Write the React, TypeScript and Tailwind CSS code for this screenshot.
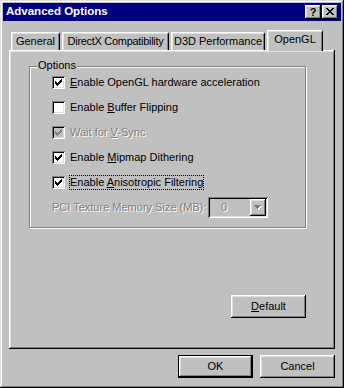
import React from "react";

const raised =
  "shadow-[inset_-1px_-1px_0_#000,inset_1px_1px_0_#fff,inset_-2px_-2px_0_#808080,inset_2px_2px_0_#dfdfdf]";
const sunken =
  "shadow-[inset_1px_1px_0_#808080,inset_-1px_-1px_0_#fff,inset_2px_2px_0_#000,inset_-2px_-2px_0_#dfdfdf]";
const disabledText = "text-[#808080] [text-shadow:1px_1px_0_#fff]";

function Check({ color = "#000" }: { color?: string }) {
  return (
    <svg width="7" height="7" viewBox="0 0 7 7" shapeRendering="crispEdges" className="block">
      <path
        fill={color}
        d="M6 0h1v1h-1zM5 1h2v1h-2zM0 2h1v1h-1zM4 2h3v1h-3zM0 3h2v1h-2zM3 3h3v1h-3zM0 4h5v1h-5zM1 5h3v1h-3zM2 6h1v1h-1z"
      />
    </svg>
  );
}

function CheckBox({ checked, disabled }: { checked?: boolean; disabled?: boolean }) {
  return (
    <div
      className={`w-[13px] h-[13px] shrink-0 flex items-center justify-center ${sunken} ${
        disabled ? "bg-[#c0c0c0]" : "bg-white"
      }`}
    >
      {checked && <Check color={disabled ? "#808080" : "#000"} />}
    </div>
  );
}

function Row({
  checked,
  disabled,
  focused,
  children,
}: {
  checked?: boolean;
  disabled?: boolean;
  focused?: boolean;
  children: React.ReactNode;
}) {
  return (
    <div className="flex items-center h-[13px]">
      <CheckBox checked={checked} disabled={disabled} />
      <span
        className={`ml-[4px] border leading-[13px] whitespace-nowrap ${
          focused ? "border-dotted border-black" : "border-transparent"
        } ${disabled ? disabledText : ""}`}
      >
        {children}
      </span>
    </div>
  );
}

function Tab({ label, w, active }: { label: string; w: string; active?: boolean }) {
  if (active) {
    return (
      <div
        className={`${w} relative z-10 -mb-px h-[21px] bg-[#c0c0c0] flex items-center justify-center pb-[2px] rounded-tr-[2px] shadow-[inset_1px_1px_0_#fff,inset_-1px_0_0_#000,inset_2px_2px_0_#dfdfdf,inset_-2px_0_0_#808080]`}
      >
        {label}
      </div>
    );
  }
  return (
    <div
      className={`${w} h-[18px] bg-[#c0c0c0] flex items-center justify-center whitespace-nowrap rounded-tr-[2px] shadow-[inset_1px_1px_0_#fff,inset_-1px_0_0_#000,inset_2px_2px_0_#dfdfdf,inset_-2px_0_0_#808080]`}
    >
      {label}
    </div>
  );
}

function Button({ children, isDefault }: { children: React.ReactNode; isDefault?: boolean }) {
  return (
    <div
      className={`w-[75px] h-[23px] flex items-center justify-center bg-[#c0c0c0] ${
        isDefault ? "border border-black" : ""
      } ${raised}`}
    >
      {children}
    </div>
  );
}

export default function App() {
  return (
    <div className="w-[344px] h-[388px] bg-[#c0c0c0] p-[3px] flex flex-col text-[11px] text-black font-['Liberation_Sans',Arial,sans-serif] select-none shadow-[inset_-1px_-1px_0_#000,inset_1px_1px_0_#dfdfdf,inset_-2px_-2px_0_#808080,inset_2px_2px_0_#fff]">
      {/* Title bar */}
      <div className="h-[18px] bg-[#000080] flex items-center pl-[3px] pr-[3px]">
        <span className="flex-1 text-white font-bold text-[11.5px] leading-none">Advanced Options</span>
        <div
          className={`w-[16px] h-[14px] bg-[#c0c0c0] flex items-center justify-center font-bold text-[11px] leading-none ${raised}`}
        >
          ?
        </div>
        <div className={`ml-[1px] w-[16px] h-[14px] bg-[#c0c0c0] flex items-center justify-center ${raised}`}>
          <svg width="8" height="7" viewBox="0 0 8 7" shapeRendering="crispEdges" className="block -mt-px">
            <path
              fill="#000"
              d="M0 0h2v1h-2zM6 0h2v1h-2zM1 1h2v1h-2zM5 1h2v1h-2zM2 2h4v1h-4zM3 3h2v1h-2zM2 4h4v1h-4zM1 5h2v1h-2zM5 5h2v1h-2zM0 6h2v1h-2zM6 6h2v1h-2z"
            />
          </svg>
        </div>
      </div>

      {/* Tabs + panel */}
      <div className="ml-[6px] mt-[9px] w-[326px]">
        <div className="flex items-end h-[20px] pl-[2px] gap-[2px]">
          <Tab label="General" w="w-[49px]" />
          <Tab label="DirectX Compatibility" w="w-[107px] tracking-[-0.3px]" />
          <Tab label="D3D Performance" w="w-[94px]" />
          <Tab label="OpenGL" w="w-[56px]" active />
        </div>
        <div className={`relative h-[299px] bg-[#c0c0c0] pt-[16px] pl-[20px] ${raised}`}>
          {/* Group box */}
          <div className="relative w-[277px] h-[162px] border border-[#808080] shadow-[inset_1px_1px_0_#fff,1px_1px_0_#fff] pt-[9px] pl-[22px]">
            <span className="absolute left-[7px] top-[-8px] px-[1px] bg-[#c0c0c0] leading-[13px]">Options</span>
            <div className="flex flex-col gap-[12px]">
              <Row checked>
                <u>E</u>nable OpenGL hardware acceleration
              </Row>
              <Row>
                Enable <u>B</u>uffer Flipping
              </Row>
              <Row checked disabled>
                Wait for <u>V</u>-Sync
              </Row>
              <Row checked>
                Enable <u>M</u>ipmap Dithering
              </Row>
              <Row checked focused>
                Enable <u>A</u>nisotropic Filtering
              </Row>
            </div>
            <div className="flex items-center mt-[8px] h-[21px]">
              <span className={`w-[156px] whitespace-nowrap ${disabledText}`}>PCI Texture Memory Size (MB):</span>
              <div className={`relative w-[60px] h-[21px] bg-[#c0c0c0] flex items-center p-[2px] ${sunken}`}>
                <span className={`flex-1 pl-[11px] ${disabledText}`}>0</span>
                <div className={`w-[16px] h-[17px] flex items-center justify-center ${raised}`}>
                  <svg width="8" height="5" viewBox="0 0 8 5" shapeRendering="crispEdges" className="block">
                    <path fill="#fff" d="M1 1h7v1h-7zM2 2h5v1h-5zM3 3h3v1h-3zM4 4h1v1h-1z" />
                    <path fill="#808080" d="M0 0h7v1h-7zM1 1h5v1h-5zM2 2h3v1h-3zM3 3h1v1h-1z" />
                  </svg>
                </div>
              </div>
            </div>
          </div>
          <div className="mt-[67px] ml-[202px]">
            <Button>
              <span>
                <u>D</u>efault
              </span>
            </Button>
          </div>
        </div>
      </div>

      {/* Bottom buttons */}
      <div className="flex mt-[6px] ml-[175px] gap-[7px]">
        <Button isDefault>OK</Button>
        <Button>Cancel</Button>
      </div>
    </div>
  );
}
